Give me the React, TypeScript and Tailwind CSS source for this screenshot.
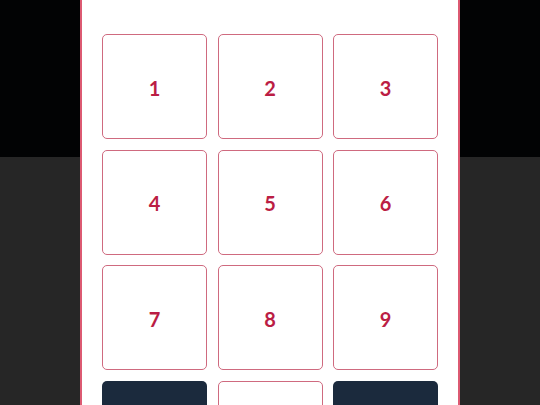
import React from 'react';

const keys = ['1', '2', '3', '4', '5', '6', '7', '8', '9'];

export default function App() {
  return (
    <div className="w-[540px] h-[405px] overflow-hidden bg-[linear-gradient(to_bottom,#020304_157px,#262626_157px)] font-['Lato',sans-serif]">
      <div className="mx-auto w-[380px] h-[405px] bg-white border-x-2 border-[#dc5a72] px-[20px] pt-[34px]">
        <div className="grid grid-cols-3 gap-[10.5px]">
          {keys.map((k) => (
            <button
              key={k}
              className="aspect-square rounded-[5px] border border-[#cf6a7f] bg-white flex items-center justify-center pt-[2px] text-[20px] font-bold text-[#bb1d44]"
            >
              {k}
            </button>
          ))}
          <button className="aspect-square rounded-[5px] bg-[#1b2a3d]" />
          <button className="aspect-square rounded-[5px] border border-[#cf6a7f] bg-white" />
          <button className="aspect-square rounded-[5px] bg-[#1b2a3d]" />
        </div>
      </div>
    </div>
  );
}
